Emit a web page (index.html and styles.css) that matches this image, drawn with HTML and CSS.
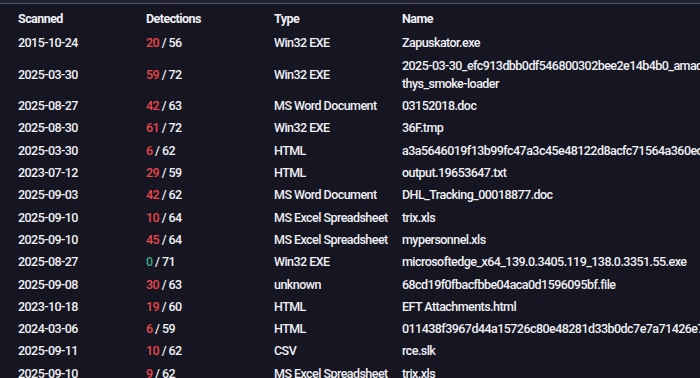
FILE: index.html
```html
<!DOCTYPE html>
<html lang="en">
<head>
    <meta charset="UTF-8">
    <title>Submissions</title>
    <link rel="stylesheet" href="styles.css">
</head>
<body>
    <div class="panel">
        <table class="scans">
            <colgroup>
                <col class="c-date">
                <col class="c-det">
                <col class="c-type">
                <col class="c-name">
            </colgroup>
            <thead>
                <tr>
                    <th>Scanned</th>
                    <th>Detections</th>
                    <th>Type</th>
                    <th>Name</th>
                </tr>
            </thead>
            <tbody>
                <tr><td>2015-10-24</td><td><span class="pos">20</span> / 56</td><td>Win32 EXE</td><td>Zapuskator.exe</td></tr>
                <tr><td>2025-03-30</td><td><span class="pos">59</span> / 72</td><td>Win32 EXE</td><td>2025-03-30_efc913dbb0df546800302bee2e14b4b0_amadey thys_smoke-loader</td></tr>
                <tr><td>2025-08-27</td><td><span class="pos">42</span> / 63</td><td>MS Word Document</td><td>03152018.doc</td></tr>
                <tr><td>2025-08-30</td><td><span class="pos">61</span> / 72</td><td>Win32 EXE</td><td>36F.tmp</td></tr>
                <tr><td>2025-03-30</td><td><span class="pos">6</span> / 62</td><td>HTML</td><td>a3a5646019f13b99fc47a3c45e48122d8acfc71564a360ec04b2a7f1c3e9d5a8</td></tr>
                <tr><td>2023-07-12</td><td><span class="pos">29</span> / 59</td><td>HTML</td><td>output.19653647.txt</td></tr>
                <tr><td>2025-09-03</td><td><span class="pos">42</span> / 62</td><td>MS Word Document</td><td>DHL_Tracking_00018877.doc</td></tr>
                <tr><td>2025-09-10</td><td><span class="pos">10</span> / 64</td><td>MS Excel Spreadsheet</td><td>trix.xls</td></tr>
                <tr><td>2025-09-10</td><td><span class="pos">45</span> / 64</td><td>MS Excel Spreadsheet</td><td>mypersonnel.xls</td></tr>
                <tr><td>2025-08-27</td><td><span class="zero">0</span> / 71</td><td>Win32 EXE</td><td>microsoftedge_x64_139.0.3405.119_138.0.3351.55.exe</td></tr>
                <tr><td>2025-09-08</td><td><span class="pos">30</span> / 63</td><td>unknown</td><td>68cd19f0fbacfbbe04aca0d1596095bf.file</td></tr>
                <tr><td>2023-10-18</td><td><span class="pos">19</span> / 60</td><td>HTML</td><td>EFT Attachments.html</td></tr>
                <tr><td>2024-03-06</td><td><span class="pos">6</span> / 59</td><td>HTML</td><td>011438f3967d44a15726c80e48281d33b0dc7e7a71426e73c5b1</td></tr>
                <tr><td>2025-09-11</td><td><span class="pos">10</span> / 62</td><td>CSV</td><td>rce.slk</td></tr>
                <tr><td>2025-09-10</td><td><span class="pos">9</span> / 62</td><td>MS Excel Spreadsheet</td><td>trix.xls</td></tr>
            </tbody>
        </table>
    </div>
</body>
</html>
```

FILE: styles.css
```css
body {
    margin: 0;
    background: #161622;
    color: #f0f0f5;
    font-family: Roboto, 'Noto Sans', sans-serif;
    font-size: 12.5px;
    font-weight: 500;
    letter-spacing: -0.55px;
    overflow: hidden;
}
.panel {
    border-top: 3px solid #22222e;
    width: 750px;
}
.panel::before {
    content: '';
    display: block;
    height: 1px;
    background: #4b5567;
}
.scans {
    border-collapse: collapse;
    table-layout: fixed;
    width: 750px;
}
.c-date,
.c-det,
.c-type {
    width: 128px;
}
.c-name {
    width: 366px;
}
th,
td {
    text-align: left;
    padding: 2px 0 2px 18px;
    line-height: 18.3px;
    vertical-align: middle;
    white-space: nowrap;
}
td:last-child {
    white-space: normal;
}
th {
    font-weight: 700;
    padding-top: 6px;
    padding-bottom: 4px;
}
.pos {
    color: #e8464b;
}
.zero {
    color: #3fa584;
}
```
